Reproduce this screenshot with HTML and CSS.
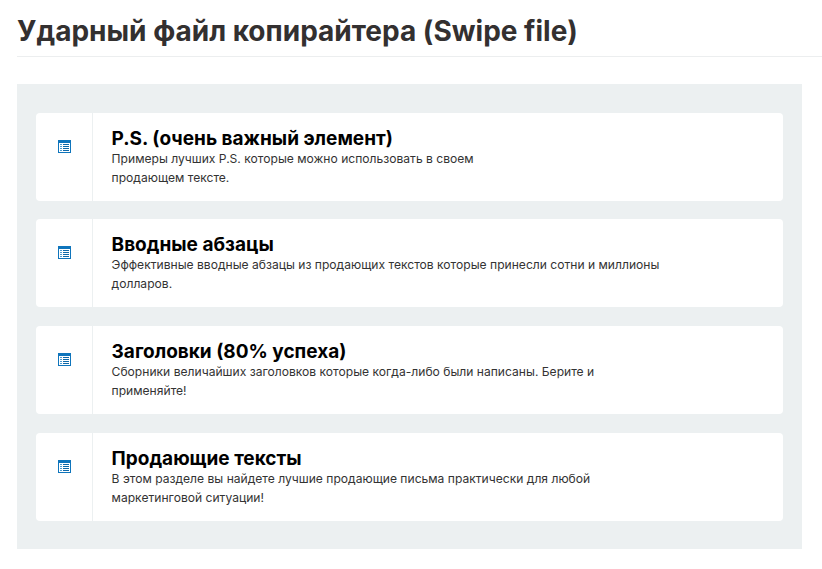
FILE: index.html
```html
<!DOCTYPE html>
<html lang="ru">
<head>
<meta charset="utf-8">
<title>Ударный файл копирайтера (Swipe file)</title>
<link rel="stylesheet" href="styles.css">
</head>
<body>
<header class="page-head">
  <h1>Ударный файл копирайтера (Swipe file)</h1>
</header>
<main class="panel">
  <a class="card">
    <div class="card-icon"><svg class="doc" viewBox="0 0 13 13"><rect width="13" height="13" fill="#0f75bc"/><rect x="1" y="3" width="11" height="9" fill="#fff"/><path d="M2 4.5h2M2 6.500h2M2 8.500h2M2 10.500h2" stroke="#4a9bd1" stroke-width="1"/><path d="M5 4.500h6M5 6.500h6M5 8.500h6M5 10.500h6" stroke="#0f69a8" stroke-width="1"/></svg></div>
    <div class="card-body">
      <h2>P.S. (очень важный элемент)</h2>
      <p class="narrow">Примеры лучших P.S. которые можно использовать в своем продающем тексте.</p>
    </div>
  </a>
  <a class="card">
    <div class="card-icon"><svg class="doc" viewBox="0 0 13 13"><rect width="13" height="13" fill="#0f75bc"/><rect x="1" y="3" width="11" height="9" fill="#fff"/><path d="M2 4.5h2M2 6.500h2M2 8.500h2M2 10.500h2" stroke="#4a9bd1" stroke-width="1"/><path d="M5 4.500h6M5 6.500h6M5 8.500h6M5 10.500h6" stroke="#0f69a8" stroke-width="1"/></svg></div>
    <div class="card-body">
      <h2>Вводные абзацы</h2>
      <p>Эффективные вводные абзацы из продающих текстов которые принесли сотни и миллионы долларов.</p>
    </div>
  </a>
  <a class="card">
    <div class="card-icon"><svg class="doc" viewBox="0 0 13 13"><rect width="13" height="13" fill="#0f75bc"/><rect x="1" y="3" width="11" height="9" fill="#fff"/><path d="M2 4.5h2M2 6.500h2M2 8.500h2M2 10.500h2" stroke="#4a9bd1" stroke-width="1"/><path d="M5 4.500h6M5 6.500h6M5 8.500h6M5 10.500h6" stroke="#0f69a8" stroke-width="1"/></svg></div>
    <div class="card-body">
      <h2>Заголовки (80% успеха)</h2>
      <p>Сборники величайших заголовков которые когда-либо были написаны. Берите и применяйте!</p>
    </div>
  </a>
  <a class="card">
    <div class="card-icon"><svg class="doc" viewBox="0 0 13 13"><rect width="13" height="13" fill="#0f75bc"/><rect x="1" y="3" width="11" height="9" fill="#fff"/><path d="M2 4.5h2M2 6.500h2M2 8.500h2M2 10.500h2" stroke="#4a9bd1" stroke-width="1"/><path d="M5 4.500h6M5 6.500h6M5 8.500h6M5 10.500h6" stroke="#0f69a8" stroke-width="1"/></svg></div>
    <div class="card-body">
      <h2>Продающие тексты</h2>
      <p>В этом разделе вы найдете лучшие продающие письма практически для любой маркетинговой ситуации!</p>
    </div>
  </a>
</main>
</body>
</html>
```
FILE: styles.css
```css
* { box-sizing: border-box; }
html, body { margin: 0; padding: 0; background: #fff; }
body {
  width: 822px;
  height: 569px;
  overflow: hidden;
  padding-left: 17px;
  font-family: Inter, "Open Sans", sans-serif;
}
.page-head {
  height: 57px;
  border-bottom: 1px solid #eceeef;
  padding-top: 11px;
}
h1 {
  margin: 0;
  font-size: 28px;
  line-height: 40px;
  font-weight: 700;
  color: #333030;
}
.panel {
  margin-top: 27px;
  width: 785px;
  height: 465px;
  background: #ecf0f1;
  padding: 28.9px 19px 28px;
  display: flex;
  flex-direction: column;
  gap: 18.55px;
}
.card {
  display: flex;
  height: 88px;
  flex: none;
  background: #fff;
  border-radius: 4px;
}
.card-icon {
  width: 57px;
  flex: none;
  border-right: 1px solid #ecf0f1;
  padding: 27px 0 0 22px;
}
.doc { display: block; width: 13px; height: 13px; }
.card-body { padding: 15px 0 0 18.6px; flex: 1; }
h2 {
  margin: 0;
  font-size: 19px;
  line-height: 21px;
  font-weight: 700;
  color: #000;
}
p {
  margin: 0;
  width: 558px;
  font-size: 12.1px;
  line-height: 19px;
  color: #333;
}
p.narrow { width: 380px; }
```
